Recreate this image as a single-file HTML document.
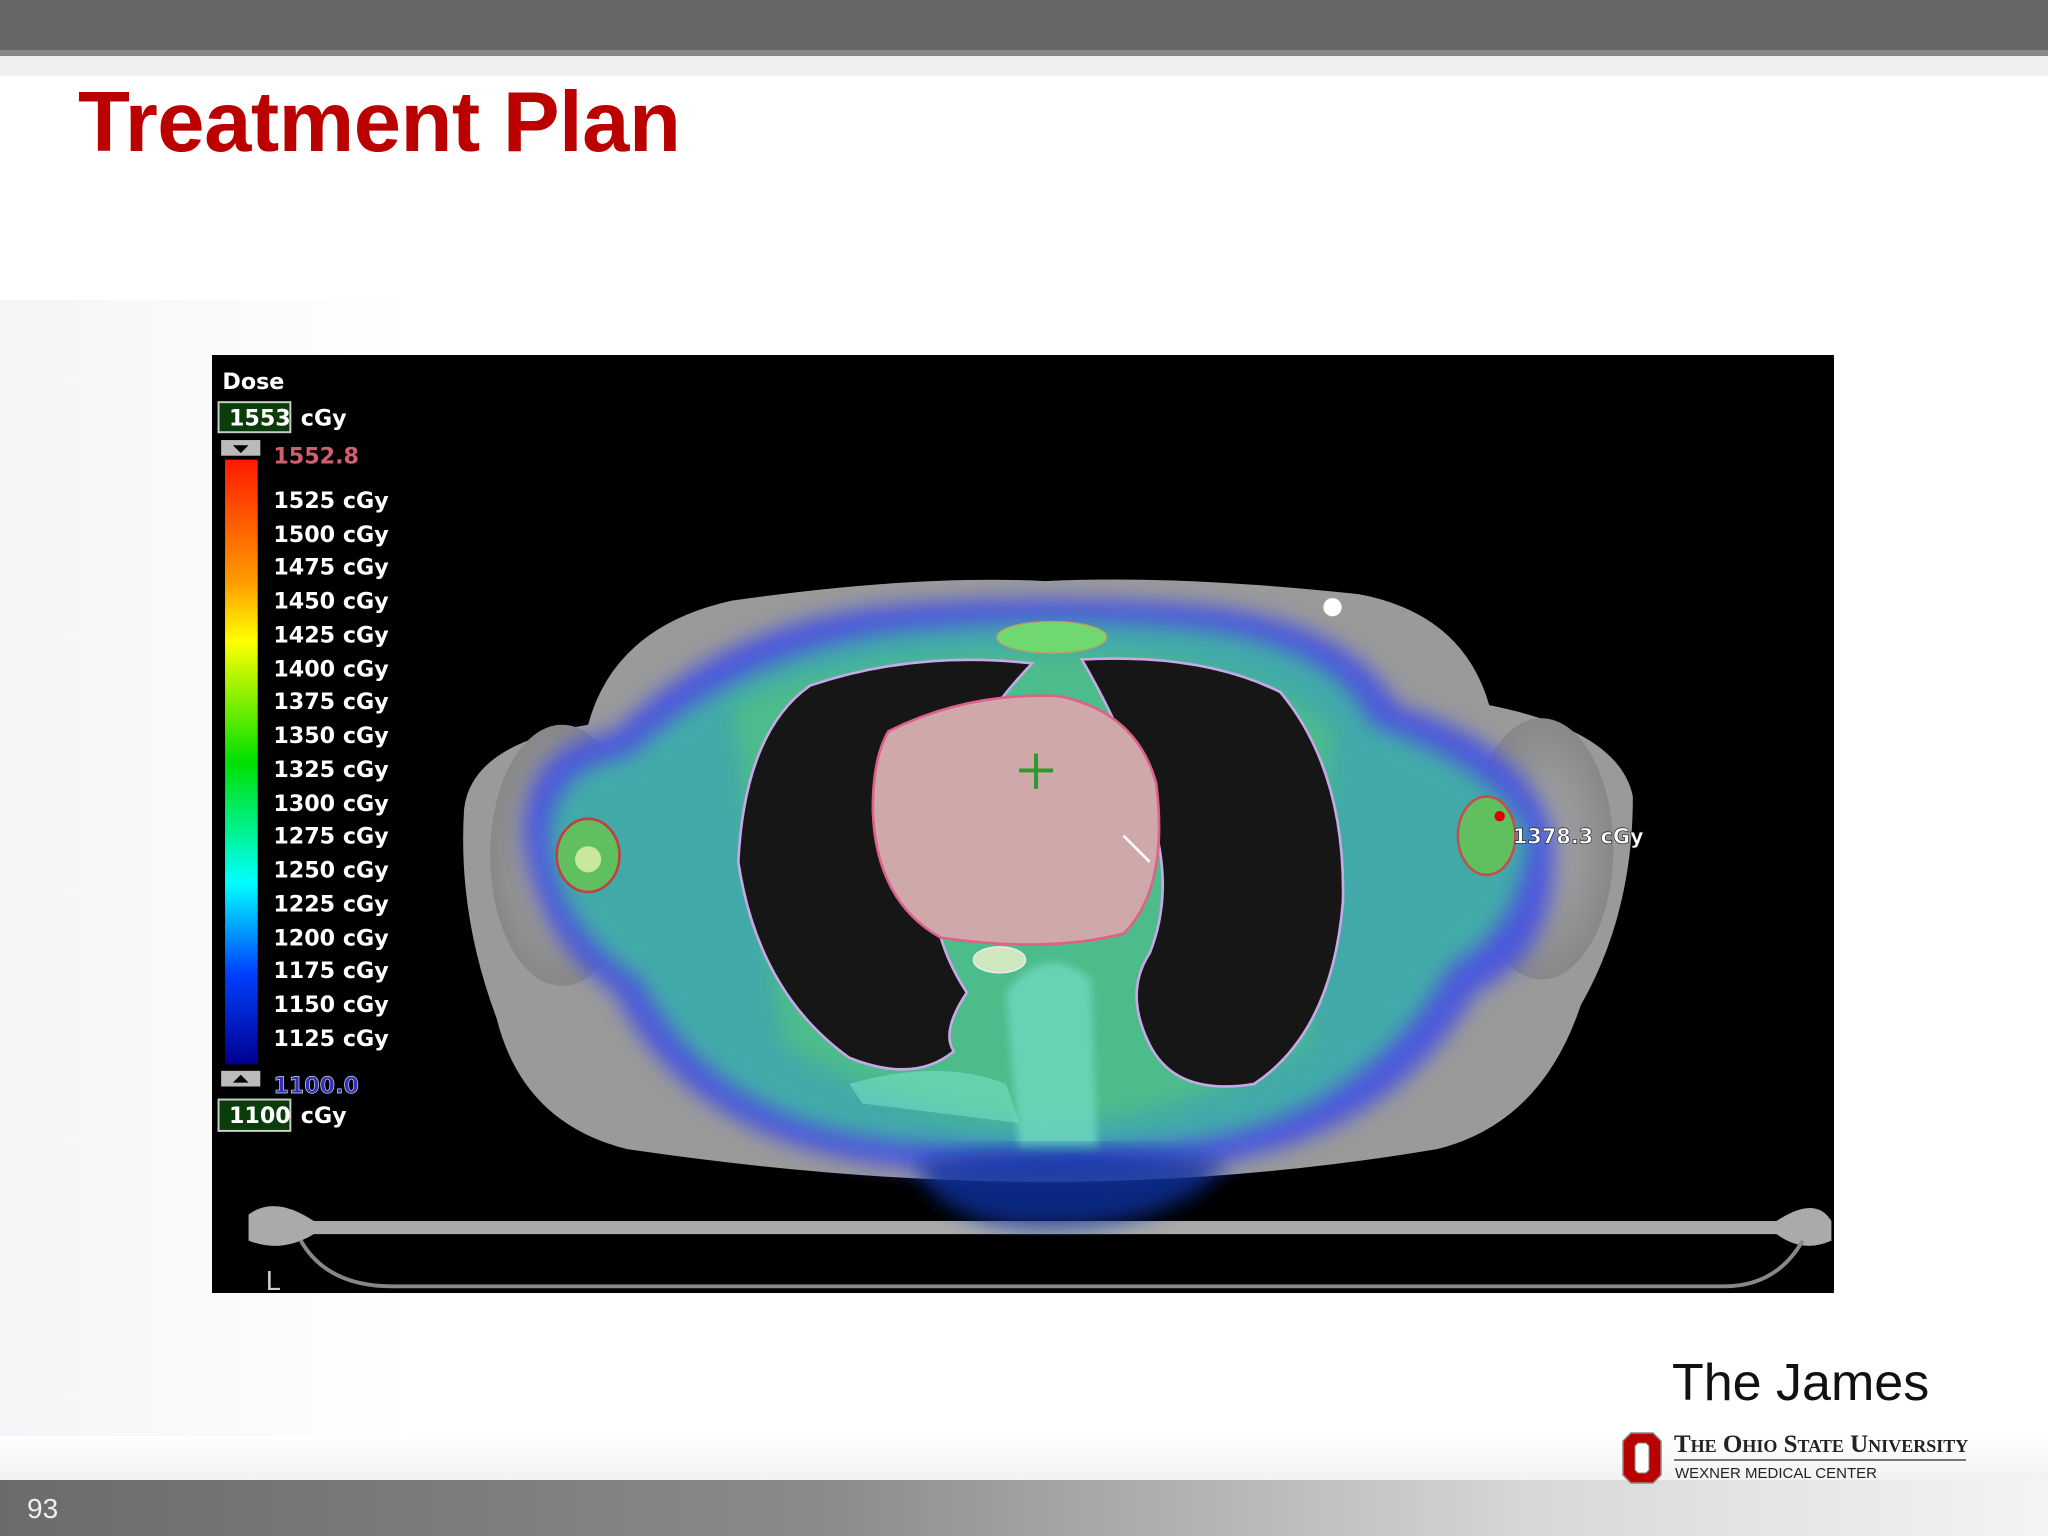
<!DOCTYPE html>
<html><head><meta charset="utf-8"><style>
body{margin:0;width:2048px;height:1536px;position:relative;overflow:hidden;background:#fff;font-family:"Liberation Sans",sans-serif}
.top{position:absolute;left:0;top:0;width:2048px;height:50px;background:#666}
.top2{position:absolute;left:0;top:50px;width:2048px;height:6px;background:#8a8a8a}
.top3{position:absolute;left:0;top:56px;width:2048px;height:20px;background:#efefef}
.grid{position:absolute;left:0;top:300px;width:700px;height:1180px;background:linear-gradient(90deg,rgba(238,238,242,.6),rgba(255,255,255,0) 60%)}
h1{position:absolute;left:78px;top:74px;margin:0;font-size:85px;font-weight:bold;color:#bb0000;letter-spacing:-0.5px}
.img{position:absolute;left:212px;top:355px;width:1622px;height:938px;background:#000}
.bot{position:absolute;left:0;top:1480px;width:2048px;height:56px;background:linear-gradient(90deg,#6b6b6b 0%,#8a8a8a 40%,#d8d8d8 75%,#f4f4f4 100%)}
.botl{position:absolute;left:0;top:1436px;width:2048px;height:44px;background:linear-gradient(180deg,#fff,#f2f2f4)}
.pn{position:absolute;left:27px;top:1493px;font-size:28px;color:#eee}
.james{position:absolute;left:1672px;top:1353px;font-size:52px;color:#111}
.osu{position:absolute;left:1674px;top:1431px;font-family:"Liberation Serif",serif;font-weight:bold;font-size:25px;font-variant:small-caps;color:#222;letter-spacing:0px}
.osul{position:absolute;left:1674px;top:1459px;width:292px;height:2px;background:#777}
.wmc{position:absolute;left:1675px;top:1465px;font-size:15px;color:#222}
</style></head><body>
<div class="top"></div><div class="top2"></div><div class="top3"></div>
<div class="grid"></div>
<h1>Treatment Plan</h1>
<div class="img">
<svg width="1622" height="938" viewBox="162 272 1242 718" style="position:absolute;left:0;top:0">
<defs>
<linearGradient id="cb" x1="0" y1="0" x2="0" y2="1">
<stop offset="0" stop-color="#ff1a00"/><stop offset=".2" stop-color="#ff9900"/><stop offset=".3" stop-color="#ffff00"/><stop offset=".5" stop-color="#00e000"/><stop offset=".7" stop-color="#00ffff"/><stop offset=".85" stop-color="#0040ff"/><stop offset="1" stop-color="#000090"/></linearGradient>
<radialGradient id="arm" cx=".5" cy=".5" r=".5"><stop offset="0" stop-color="#aaa"/><stop offset="1" stop-color="#888"/></radialGradient>
<filter id="bl"><feGaussianBlur stdDeviation="8"/></filter>
<filter id="bl2"><feGaussianBlur stdDeviation="3"/></filter>
</defs>
<path d="M190 930 Q210 915 240 935 L1360 935 Q1390 915 1402 935 L1402 950 Q1380 960 1360 945 L240 945 Q215 960 190 950Z" fill="#aaa"/>
<path d="M230 950 Q250 985 300 985 L1320 985 Q1360 985 1380 950" stroke="#888" stroke-width="3" fill="none"/>
<path d="M355 620 Q360 570 450 555 Q470 480 560 460 Q700 440 800 445 Q900 440 1040 455 Q1120 470 1140 540 Q1240 560 1250 610 Q1250 700 1210 770 Q1180 860 1100 880 Q950 905 800 905 Q650 905 480 880 Q400 860 380 780 Q350 700 355 620Z" fill="#9a9a9a"/>
<ellipse cx="430" cy="655" rx="55" ry="100" fill="url(#arm)"/>
<ellipse cx="1180" cy="650" rx="55" ry="100" fill="url(#arm)"/>
<path d="M400 640 Q400 570 470 560 Q560 470 700 462 Q800 455 900 462 Q1030 470 1070 540 Q1170 570 1190 640 Q1195 730 1130 760 Q1060 880 900 895 Q800 905 700 895 Q530 880 470 760 Q410 720 400 640Z" fill="#4a55e0" filter="url(#bl)" opacity=".95"/>
<path d="M420 640 Q425 585 480 580 Q570 495 700 482 Q800 472 900 480 Q1020 490 1050 555 Q1150 590 1170 640 Q1165 710 1110 740 Q1040 860 900 875 Q800 885 700 875 Q550 865 490 750 Q425 710 420 640Z" fill="#3fb9a0" filter="url(#bl)" opacity=".85"/>
<path d="M560 540 Q640 500 800 500 Q960 500 1020 560 L1000 800 Q900 860 800 860 Q700 860 600 800Z" fill="#56c878" filter="url(#bl)" opacity=".6"/>
<path d="M620 525 Q700 498 790 508 Q740 560 720 620 Q700 700 740 760 Q720 790 730 805 Q700 830 650 810 Q580 760 565 660 Q570 560 620 525Z" fill="#161616" stroke="#c8a8e8" stroke-width="2"/>
<path d="M828 505 Q920 500 980 530 Q1030 590 1028 690 Q1020 790 960 830 Q900 840 880 800 Q860 760 880 730 Q900 680 880 620 Q860 560 828 505Z" fill="#161616" stroke="#c8a8e8" stroke-width="2"/>
<path d="M680 560 Q740 530 810 533 Q870 545 885 600 Q895 680 860 715 Q800 730 720 718 Q670 690 668 620 Q668 580 680 560Z" fill="#cfa9a9" stroke="#e0608a" stroke-width="2"/>
<path d="M780 590 L806 590 M793 577 L793 604" stroke="#2a9a2a" stroke-width="3"/>
<path d="M860 640 L880 660" stroke="#fff" stroke-width="2"/>
<path d="M770 760 Q800 720 835 750 L840 880 L780 880Z" fill="#6fd8c0" filter="url(#bl2)" opacity=".8"/>
<path d="M650 830 Q720 810 770 830 L780 860 L660 845Z" fill="#7ae8d0" opacity=".5"/>
<ellipse cx="765" cy="735" rx="20" ry="10" fill="#cfe8c0" stroke="#eee"/>
<ellipse cx="805" cy="488" rx="42" ry="12" fill="#70d870" stroke="#c0a060"/>
<ellipse cx="450" cy="655" rx="24" ry="28" fill="#60c060" stroke="#c04040" stroke-width="2"/>
<ellipse cx="450" cy="658" rx="10" ry="10" fill="#c8e8a0"/>
<ellipse cx="1138" cy="640" rx="22" ry="30" fill="#60c060" stroke="#c05050" stroke-width="2"/>
<circle cx="1148" cy="625" r="4" fill="#d00"/>
<circle cx="1020" cy="465" r="7" fill="#fff"/>
<path d="M700 890 Q800 870 940 890 Q900 940 800 940 Q720 940 700 890Z" fill="#1030a0" filter="url(#bl)" opacity=".8"/>
<text x="1158" y="646" fill="#fff" font-family="DejaVu Sans" font-weight="bold" font-size="16" stroke="#222" stroke-width=".5">1378.3 cGy</text>
<text x="203" y="988" fill="#ccc" font-family="DejaVu Sans" font-size="20">L</text>
<rect x="172" y="352" width="25" height="463" fill="url(#cb)"/>
<rect x="169" y="337" width="30" height="12" fill="#bbb"/><path d="M178 341 L190 341 L184 347Z" fill="#000"/>
<rect x="169" y="820" width="30" height="12" fill="#bbb"/><path d="M178 829 L190 829 L184 823Z" fill="#000"/>
<rect x="167" y="308" width="55" height="23" fill="#0b3d0b" stroke="#ccc" stroke-width="1.5"/>
<rect x="167" y="842" width="55" height="24" fill="#0b3d0b" stroke="#ccc" stroke-width="1.5"/>
<g font-family="DejaVu Sans" font-weight="bold" font-size="17" fill="#fff">
<text x="170" y="298">Dose</text>
<text x="175" y="326">1553</text><text x="230" y="326">cGy</text>
<text x="209" y="355" fill="#d06070">1552.8</text>
<text x="209" y="389">1525 cGy</text><text x="209" y="415">1500 cGy</text><text x="209" y="440">1475 cGy</text><text x="209" y="466">1450 cGy</text><text x="209" y="492">1425 cGy</text><text x="209" y="518">1400 cGy</text><text x="209" y="543">1375 cGy</text><text x="209" y="569">1350 cGy</text><text x="209" y="595">1325 cGy</text><text x="209" y="621">1300 cGy</text><text x="209" y="646">1275 cGy</text><text x="209" y="672">1250 cGy</text><text x="209" y="698">1225 cGy</text><text x="209" y="724">1200 cGy</text><text x="209" y="749">1175 cGy</text><text x="209" y="775">1150 cGy</text><text x="209" y="801">1125 cGy</text>
<text x="209" y="837" fill="#3030c0" stroke="#ddd" stroke-width=".5">1100.0</text>
<text x="175" y="860">1100</text><text x="230" y="860">cGy</text>
</g>
</svg>
</div>
<div class="botl"></div>
<div class="bot"></div>
<div class="pn">93</div>
<div class="james">The James</div>
<svg style="position:absolute;left:1622px;top:1432px" width="40" height="52" viewBox="0 0 40 52"><path d="M9 1 L31 1 L39 9 L39 43 L31 51 L9 51 L1 43 L1 9Z" fill="#bb0000" stroke="#888" stroke-width="1.5"/><path d="M16 11 L24 11 L27 14 L27 38 L24 41 L16 41 L13 38 L13 14Z" fill="#fff" stroke="#888"/></svg>
<div class="osu">The Ohio State University</div>
<div class="osul"></div>
<div class="wmc">WEXNER MEDICAL CENTER</div>
</body></html>
